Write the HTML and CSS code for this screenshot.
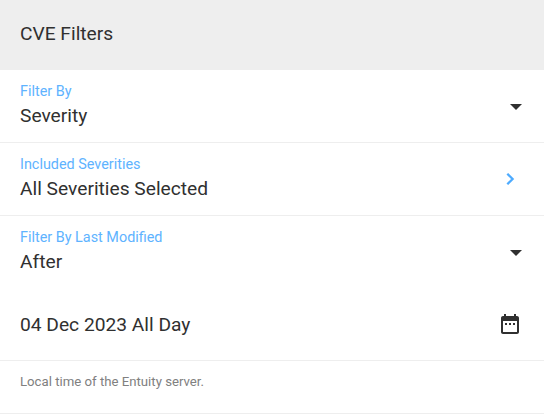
FILE: index.html
```html
<!DOCTYPE html>
<html lang="en">
<head>
  <meta charset="UTF-8" />
  <meta name="viewport" content="width=device-width, initial-scale=1.0" />
  <title>CVE Filters</title>
  <link rel="stylesheet" href="styles.css">
</head>
<body>
  <header>
    <h1>CVE Filters</h1>
  </header>

  <div class="row">
    <div class="field">
      <span class="label">Filter By</span>
      <span class="value">Severity</span>
    </div>
    <svg class="icon arrow" viewBox="0 0 24 24"><path d="M6 9l6 6 6-6z"/></svg>
  </div>

  <div class="row">
    <div class="field">
      <span class="label">Included Severities</span>
      <span class="value">All Severities Selected</span>
    </div>
    <svg class="icon chevron" viewBox="0 0 24 24"><path d="M9.300 6.700l5.300 5.300-5.300 5.300"/></svg>
  </div>

  <div class="row no-line">
    <div class="field">
      <span class="label">Filter By Last Modified</span>
      <span class="value">After</span>
    </div>
    <svg class="icon arrow" viewBox="0 0 24 24"><path d="M6 9l6 6 6-6z"/></svg>
  </div>

  <div class="row date">
    <span class="value">04 Dec 2023 All Day</span>
    <svg class="icon calendar" viewBox="0 0 24 24"><path d="M19 4h-1V2h-2v2H8V2H6v2H5c-1.11 0-1.99.9-1.99 2L3 20c0 1.100.89 2 2 2h14c1.100 0 2-.9 2-2V6c0-1.100-.9-2-2-2zm0 16H5V9h14v11zM7 11h2v2H7zm4 0h2v2h-2zm4 0h2v2h-2z"/></svg>
  </div>

  <p class="note">Local time of the Entuity server.</p>
</body>
</html>
```

FILE: styles.css
```css
* { box-sizing: border-box; }
body { font-family: Roboto, Arial, sans-serif; background: white; color: #303030; margin: 0; }
header { background: #eeeeee; height: 70px; padding: 22px 20px; }
h1 { font-size: 19.2px; font-weight: 400; line-height: 24px; margin: 0; }
.row { display: flex; justify-content: space-between; height: 73px; padding: 12px 16px 0 20px; border-bottom: 1px solid #eeeeee; }
.no-line { border-bottom: none; }
.field { display: flex; flex-direction: column; }
.label { color: #5eb3ff; font-size: 14.4px; line-height: 20px; }
.value { font-size: 19.2px; line-height: 28px; }
.icon { width: 24px; height: 24px; fill: #303030; }
.arrow { margin-top: 13px; }
.chevron { margin-top: 12px; margin-right: 6px; fill: none; stroke: #4dabff; stroke-width: 2.3; }
.date { height: 72px; padding-top: 22px; }
.calendar { margin-top: 1px; margin-right: 6px; }
.note { color: #808080; font-size: 13.2px; line-height: 20px; height: 53px; margin: 0; padding: 11px 20px; border-bottom: 1px solid #eeeeee; }
```
